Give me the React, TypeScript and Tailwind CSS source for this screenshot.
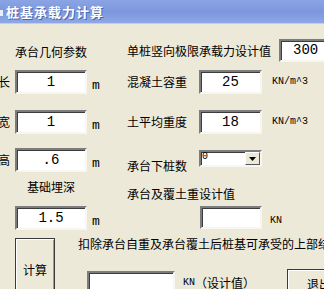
import React from 'react';

const cjk = "font-['Noto_Sans_CJK_SC',sans-serif]";
const mono = "font-['Liberation_Mono',monospace]";
const sunken =
  'bg-white border-2 border-t-[#7c7c7c] border-l-[#7c7c7c] border-b-[#f7f6f1] border-r-[#f7f6f1] shadow-[inset_1px_1px_0_#3c3c3c]';
const raised =
  'bg-[#ece9d8] border border-[#3a3a3a] shadow-[inset_1px_1px_0_#fff,inset_-1px_-1px_0_#a09d90]';

function Field({ value, w, h = 24, left }: { value: string; w: number; h?: number; left?: boolean }) {
  return (
    <div
      className={`${sunken} ${mono} flex items-center ${left ? 'justify-start pl-[12px]' : 'justify-center'} text-[14px] text-black shrink-0`}
      style={{ width: w, height: h }}
    >
      {value}
    </div>
  );
}

function LeftRow({ label, value }: { label?: string; value: string }) {
  return (
    <div className="flex items-center">
      <span className={`${cjk} text-[12px] w-[17px] -ml-[2px] leading-none`}>{label}</span>
      <Field value={value} w={72} />
      <span className={`${mono} text-[13px] ml-[5px] self-end mb-[2px] leading-none`}>m</span>
    </div>
  );
}

function RightRow({ label, value }: { label: string; value: string }) {
  return (
    <div className="flex items-center">
      <span className={`${cjk} text-[12px] w-[72px] leading-none`}>{label}</span>
      <Field value={value} w={63} />
      <span className={`${mono} text-[10px] ml-[10px] leading-none`}>KN/m^3</span>
    </div>
  );
}

export default function App() {
  return (
    <div className="w-[324px] h-[289px] overflow-hidden bg-[#ece9d8] text-black">
      {/* title bar */}
      <div className="h-[24px] bg-gradient-to-b from-[#8aa4e4] via-[#7c97dd] to-[#8ea7e5] border-b border-[#c2cdee] flex items-center">
        <div className="w-[3px] h-[6px] bg-[#e8eefc] mt-[2px]" />
        <span
          className={`${cjk} ml-[3px] text-[13px] font-bold text-white tracking-[1px] [text-shadow:1px_1px_0_#4a66b0]`}
        >
          桩基承载力计算
        </span>
      </div>

      <div className="flex h-[205px]">
        {/* left column */}
        <div className="w-[127px] shrink-0 flex flex-col">
          <div className={`${cjk} text-[12px] leading-[16px] ml-[15px] w-[72px] text-center mt-[20px]`}>承台几何参数</div>
          <div className="mt-[10px]">
            <LeftRow label="长" value="1" />
          </div>
          <div className="mt-[16px]">
            <LeftRow label="宽" value="1" />
          </div>
          <div className="mt-[14px]">
            <LeftRow label="高" value=".6" />
          </div>
          <div className={`${cjk} text-[12px] leading-[16px] ml-[15px] w-[72px] text-center mt-[7px]`}>基础埋深</div>
          <div className="mt-[11px]">
            <LeftRow value="1.5" />
          </div>
        </div>

        {/* right column */}
        <div className="flex-1 flex flex-col">
          <div className="flex items-center mt-[15px]">
            <span className={`${cjk} text-[12px] leading-none whitespace-nowrap`}>单桩竖向极限承载力设计值</span>
            <div className="ml-[8px]">
              <Field value="300" w={72} h={23} left />
            </div>
          </div>
          <div className="mt-[8px]">
            <RightRow label="混凝土容重" value="25" />
          </div>
          <div className="mt-[16px]">
            <RightRow label="土平均重度" value="18" />
          </div>
          <div className="flex items-end mt-[16px]">
            <span className={`${cjk} text-[12px] w-[72px] leading-none mb-[-5px]`}>承台下桩数</span>
            <div className={`${sunken} w-[63px] h-[17px] flex items-start`}>
              <span className={`${mono} text-[10px] leading-none ml-[1px] flex-1`}>0</span>
              <div className="w-[15px] h-[13px] bg-[#ece9d8] border border-t-white border-l-white border-b-[#555] border-r-[#555] flex items-center justify-center">
                <svg width="7" height="4" viewBox="0 0 7 4">
                  <path d="M0 0h7L3.5 4z" fill="#000" />
                </svg>
              </div>
            </div>
          </div>
          <div className={`${cjk} text-[12px] leading-[16px] mt-[19px]`}>承台及覆土重设计值</div>
          <div className="flex items-center mt-[4px]">
            <div className="ml-[73px]">
              <Field value="" w={62} h={23} />
            </div>
            <span className={`${mono} text-[10px] ml-[8px] leading-none mt-[6px]`}>KN</span>
          </div>
        </div>
      </div>

      {/* bottom section */}
      <div className="flex">
        <button className={`${cjk} ${raised} ml-[15px] mt-[9px] w-[40px] h-[64px] shrink-0 text-[12px]`}>
          计算
        </button>
        <div className="flex flex-col ml-[23px] shrink-0">
          <div className={`${cjk} text-[12px] leading-[16px] mt-[7px] whitespace-nowrap`}>
            扣除承台自重及承台覆土后桩基可承受的上部结构荷载
          </div>
          <div className="flex items-start mt-[19px] ml-[9px]">
            <Field value="" w={88} h={30} />
            <span className="ml-[8px] mt-[6px] w-[72px] shrink-0 flex items-center whitespace-nowrap">
              <span className={`${mono} text-[10px] leading-none`}>KN</span>
              <span className={`${cjk} text-[12px] leading-none`}>（设计值）</span>
            </span>
            <button className={`${cjk} ${raised} ml-[32px] -mt-[2px] w-[64px] h-[30px] shrink-0 text-[12px] text-center`}>
              退出
            </button>
          </div>
        </div>
      </div>
    </div>
  );
}
